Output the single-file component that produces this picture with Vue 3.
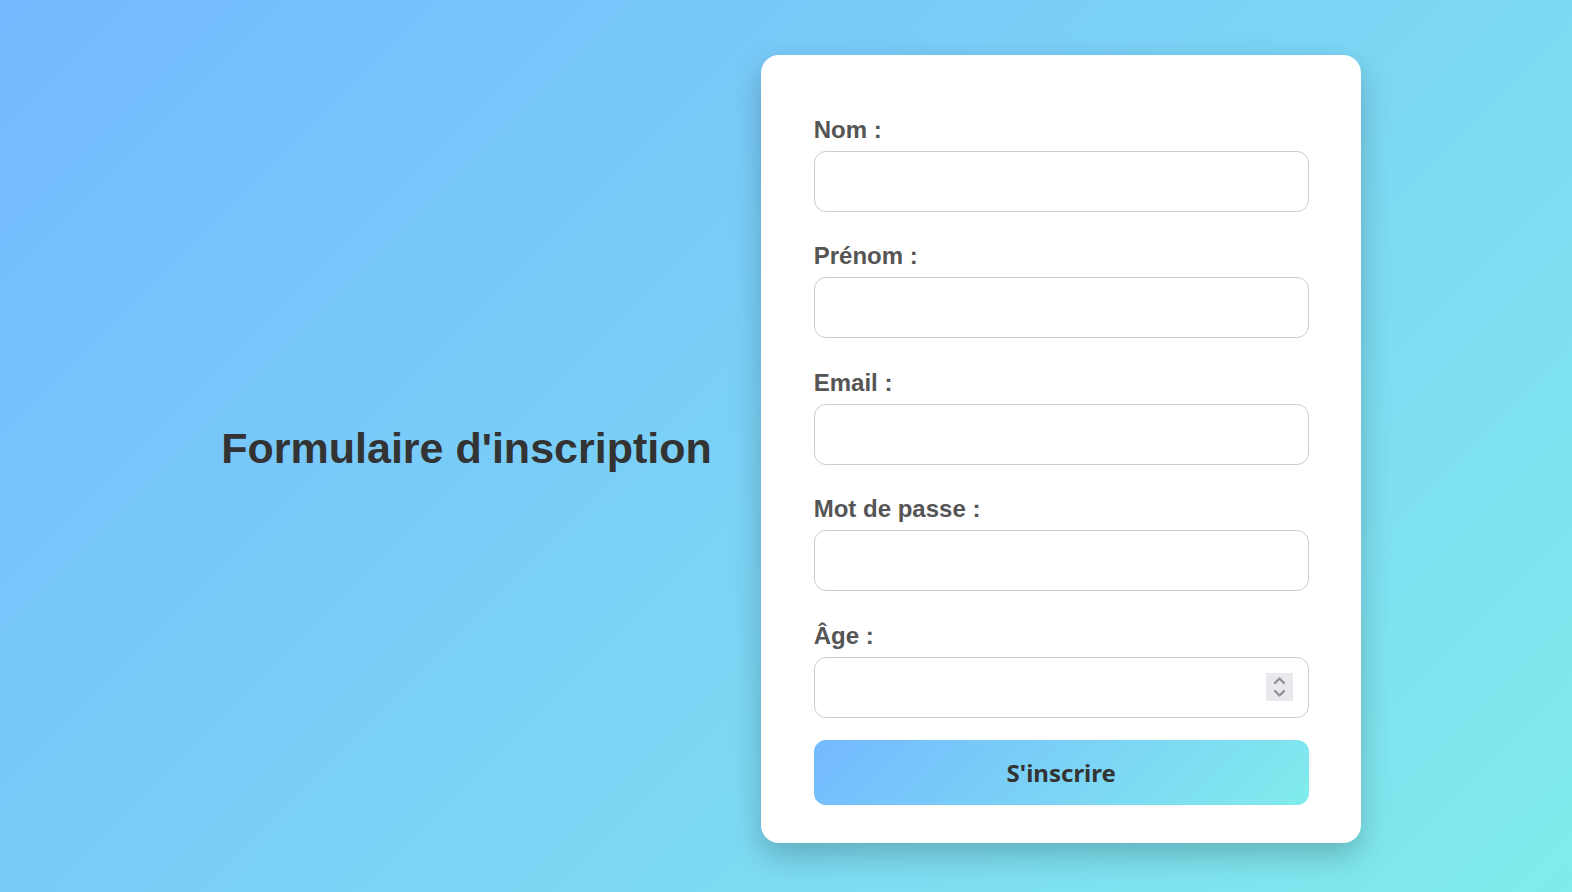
<script setup>
import { reactive } from 'vue'

const fields = [
  { id: 'nom', label: 'Nom :', type: 'text' },
  { id: 'prenom', label: 'Prénom :', type: 'text' },
  { id: 'email', label: 'Email :', type: 'email' },
  { id: 'motdepasse', label: 'Mot de passe :', type: 'password' },
  { id: 'age', label: 'Âge :', type: 'number' },
]

const values = reactive({ nom: '', prenom: '', email: '', motdepasse: '', age: '' })
</script>

<template>
  <main class="page">
    <h1 class="title">Formulaire d'inscription</h1>
    <form class="card" @submit.prevent>
      <div v-for="field in fields" :key="field.id" class="field">
        <label class="label" :for="field.id">{{ field.label }}</label>
        <div class="control">
          <input :id="field.id" v-model="values[field.id]" class="input" :type="field.type" :name="field.id" />
          <svg v-if="field.type === 'number'" class="spinner" viewBox="0 0 27 28" aria-hidden="true">
            <rect width="27" height="28" fill="#e9e9ed" />
            <path d="M9 10 L13.500 5.500 L18 10 M9 18 L13.500 22.500 L18 18" fill="none" stroke="#8f8f9d" stroke-width="2.300" stroke-linecap="round" stroke-linejoin="round" />
          </svg>
        </div>
      </div>
      <button class="submit" type="submit">S'inscrire</button>
    </form>
  </main>
</template>

<style>
body {
  margin: 0;
}
</style>

<style scoped>
.page {
  display: flex;
  justify-content: center;
  align-items: center;
  gap: 49px;
  min-height: 100vh;
  box-sizing: border-box;
  padding: 6px 0 0 10px;
  background: linear-gradient(135deg, #74b9ff, #81ecec) no-repeat;
  background-size: calc(100% + 10px) calc(100% + 6px);
  font-family: "Liberation Sans", Arial, sans-serif;
}

.title {
  margin: 0;
  padding-bottom: 2px;
  color: #333;
  font-size: 43px;
  line-height: 50px;
  font-weight: bold;
}

.card {
  box-sizing: border-box;
  width: 100%;
  max-width: 600px;
  padding: 61px 52px 38px 53px;
  border-radius: 18px;
  background: #fff;
  box-shadow: 0 12px 30px rgba(0, 0, 0, 0.22);
}

.field {
  margin-bottom: 30px;
}

.field:nth-child(even) {
  margin-bottom: 31px;
}

.field:nth-last-child(2) {
  margin-bottom: 22px;
}

.label {
  display: block;
  margin-bottom: 7px;
  color: #555;
  font-size: 24px;
  line-height: 28px;
  font-weight: bold;
}

.control {
  position: relative;
}

.input {
  display: block;
  box-sizing: border-box;
  width: 100%;
  height: 61px;
  margin: 0;
  padding: 16px 18px;
  border: 1px solid #ccc;
  border-radius: 12px;
  outline: none;
  background: #fff;
  color: #333;
  font-family: inherit;
  font-size: 24px;
  line-height: 27px;
  appearance: none;
}

.input[type="number"] {
  appearance: textfield;
}

.input:focus {
  border-color: #74b9ff;
}

.spinner {
  position: absolute;
  top: 16px;
  right: 16px;
  width: 27px;
  height: 28px;
  pointer-events: none;
}

.submit {
  display: block;
  width: 100%;
  padding: 18px;
  border: none;
  border-radius: 12px;
  background: linear-gradient(135deg, #74b9ff, #81ecec);
  color: #333;
  font-family: "Noto Sans", Tahoma, sans-serif;
  font-size: 24px;
  line-height: 29px;
  font-weight: bold;
  cursor: pointer;
}
</style>
